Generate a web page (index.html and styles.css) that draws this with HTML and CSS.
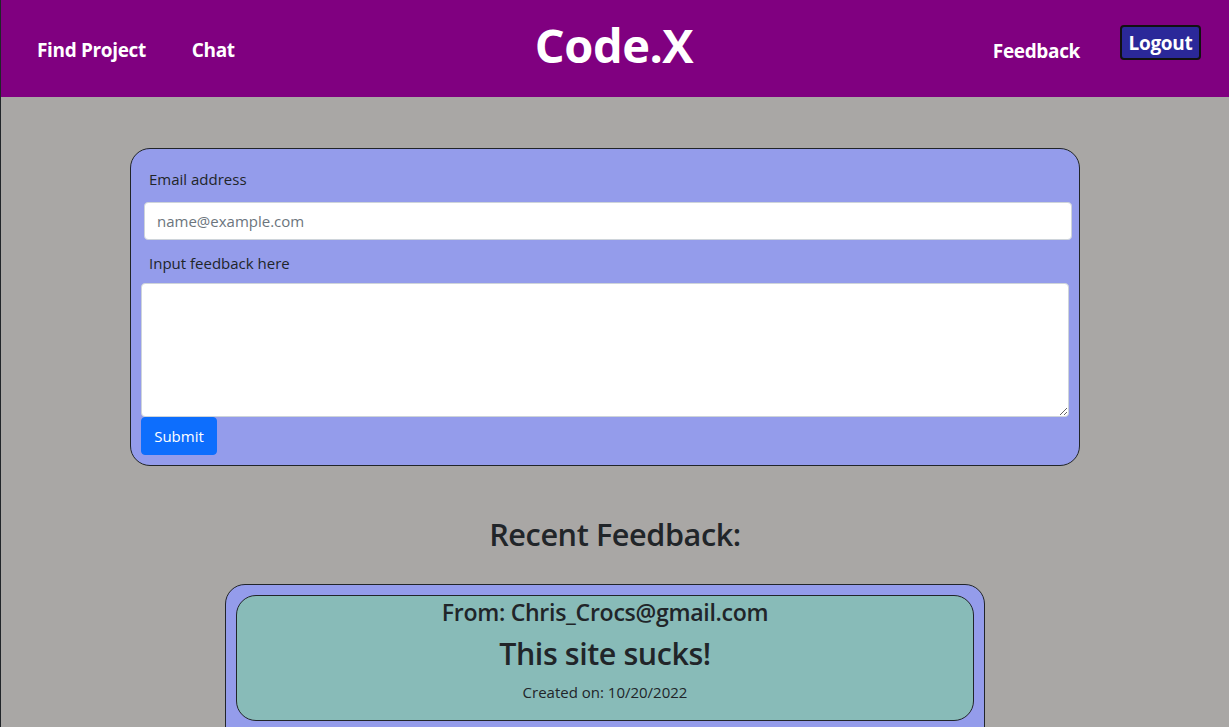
FILE: index.html
```html
<!DOCTYPE html>
<html lang="en">
<head>
<meta charset="utf-8">
<title>Code.X - Feedback</title>
<link rel="stylesheet" href="styles.css">
</head>
<body>
<div class="page">
  <header class="topbar">
    <nav class="nav-left">
      <a class="nav-link" href="#">Find Project</a>
      <a class="nav-link" href="#">Chat</a>
    </nav>
    <div class="brand">Code.X</div>
    <nav class="nav-right">
      <a class="nav-link" href="#">Feedback</a>
      <button class="logout" type="button">Logout</button>
    </nav>
  </header>

  <main class="content">
    <form class="form-card">
      <label class="form-label" for="email">Email address</label>
      <input class="form-input" id="email" type="email" placeholder="name@example.com">
      <label class="form-label second" for="fb">Input feedback here</label>
      <textarea class="form-textarea" id="fb"></textarea>
      <button class="submit" type="button">Submit</button>
    </form>

    <h2 class="recent-title">Recent Feedback:</h2>

    <section class="feed-outer">
      <article class="feed-item">
        <h4 class="feed-from">From: Chris_Crocs@gmail.com</h4>
        <h2 class="feed-text">This site sucks!</h2>
        <p class="feed-date">Created on: 10/20/2022</p>
      </article>
    </section>
  </main>
</div>
</body>
</html>
```

FILE: styles.css
```css
* { box-sizing: border-box; }

html, body {
  margin: 0;
  padding: 0;
}

body {
  background: #a9a7a5;
  font-family: "Open Sans", "Noto Sans", sans-serif;
  color: #212529;
  overflow: hidden;
}

.page {
  border-left: 1px solid #212529;
  min-height: 727px;
}

.topbar {
  height: 97px;
  background: #800080;
  display: grid;
  grid-template-columns: 1fr auto 1fr;
  align-items: center;
}

.nav-left {
  display: flex;
  align-items: center;
  gap: 46px;
  padding-left: 36px;
  padding-top: 2px;
}

.nav-right {
  display: flex;
  align-items: center;
  justify-content: flex-end;
  padding-right: 28px;
  gap: 40px;
}

.nav-link {
  color: #fff;
  text-decoration: none;
  font-size: 19px;
  font-weight: 700;
  letter-spacing: -0.35px;
}

.nav-right .nav-link {
  padding-top: 4px;
}

.brand {
  color: #fff;
  font-size: 47px;
  font-weight: 700;
  letter-spacing: -0.5px;
  line-height: 1;
  padding-bottom: 6px;
  padding-right: 2px;
}

.logout {
  font-family: inherit;
  background: #2b2899;
  color: #fff;
  border: 2px solid #111;
  border-radius: 4px;
  font-size: 19px;
  font-weight: 700;
  letter-spacing: -0.3px;
  width: 81px;
  height: 35px;
  padding: 0;
  margin-bottom: 12px;
}

.content {
  width: 950px;
  margin-left: 129px;
  padding-top: 51px;
}

.form-card {
  background: #949ceb;
  border: 1px solid #212529;
  border-radius: 20px;
  padding: 18px 10px 10px 10px;
  display: flex;
  flex-direction: column;
  align-items: flex-start;
}

.form-label {
  font-size: 15px;
  line-height: 24px;
  padding-left: 8px;
  margin-bottom: 11px;
}

.form-label.second {
  margin-top: 11px;
  margin-bottom: 8px;
}

.form-input {
  width: 928px;
  height: 38px;
  margin-left: 3px;
  border: 1px solid #ced4da;
  border-radius: 4px;
  background: #fff;
  padding: 6px 12px;
  font-family: inherit;
  font-size: 15px;
  color: #212529;
}

.form-input::placeholder {
  color: #6c757d;
}

.form-textarea {
  width: 928px;
  height: 134px;
  border: 1px solid #ced4da;
  border-radius: 4px;
  background: #fff;
  font-family: inherit;
  font-size: 15px;
  padding: 6px 12px;
  display: block;
  margin: 0;
}

.submit {
  background: #0d6efd;
  color: #fff;
  border: 1px solid #0d6efd;
  border-radius: 4px;
  width: 76px;
  height: 38px;
  padding: 0;
  font-family: inherit;
  font-size: 15px;
}

.recent-title {
  margin: 0;
  padding-top: 49px;
  text-align: center;
  font-size: 30.6px;
  font-weight: 600;
  line-height: 38px;
  letter-spacing: -0.4px;
  position: relative;
  left: 10px;
}

.feed-outer {
  width: 760px;
  margin: 31px auto 0;
  background: #949ceb;
  border: 1px solid #212529;
  border-radius: 20px;
  padding: 10px 10px 30px;
}

.feed-item {
  background: #88bbb8;
  border: 1px solid #212529;
  border-radius: 20px;
  text-align: center;
  padding: 1px 0 17px;
}

.feed-from {
  margin: 0;
  font-size: 23.1px;
  font-weight: 600;
  line-height: 30px;
  letter-spacing: -0.3px;
}

.feed-text {
  margin: 8px 0 0;
  font-size: 30.4px;
  font-weight: 600;
  line-height: 38px;
  letter-spacing: -0.4px;
}

.feed-date {
  margin: 8px 0 0;
  font-size: 15px;
  line-height: 22px;
}
```
